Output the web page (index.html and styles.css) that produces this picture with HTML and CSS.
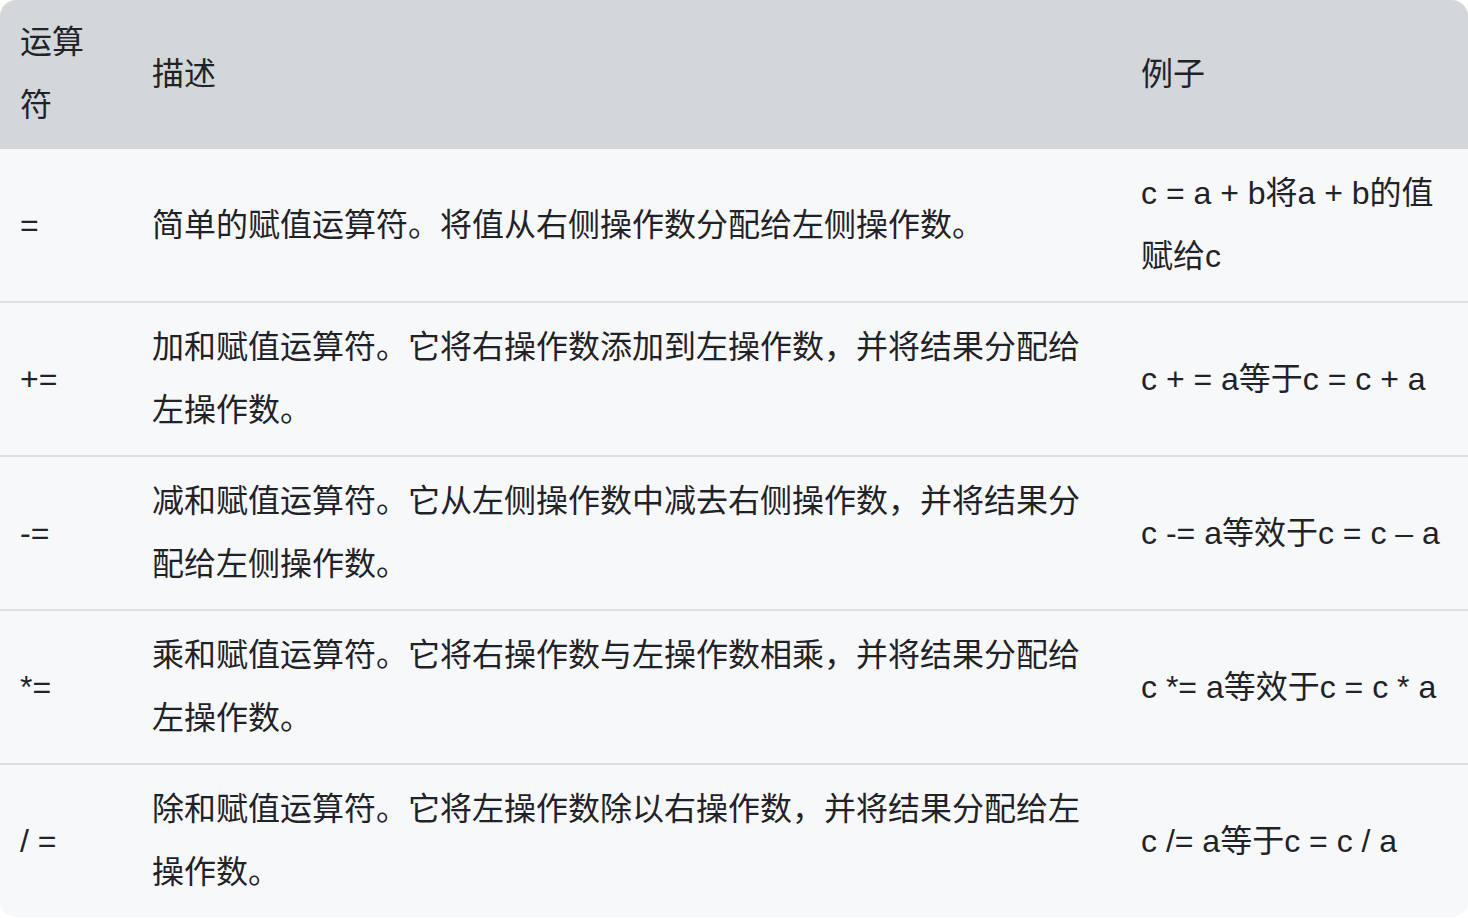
FILE: index.html
```html
<!DOCTYPE html>
<html lang="zh-CN">
<head>
    <meta charset="UTF-8">
    <meta name="viewport" content="width=device-width, initial-scale=1.0">
    <title>赋值运算符</title>
    <link rel="stylesheet" href="styles.css">
</head>
<body>
    <div class="tabela">
        <table>
            <thead>
                <tr>
                    <th class="col-op">运算符</th>
                    <th class="col-desc">描述</th>
                    <th class="col-ex">例子</th>
                </tr>
            </thead>
            <tbody>
                <tr>
                    <td>=</td>
                    <td>简单的赋值运算符。将值从右侧操作数分配给左侧操作数。</td>
                    <td>c = a + b将a + b的值赋给c</td>
                </tr>
                <tr>
                    <td>+=</td>
                    <td>加和赋值运算符。它将右操作数添加到左操作数，并将结果分配给左操作数。</td>
                    <td>c + = a等于c = c + a</td>
                </tr>
                <tr>
                    <td>-=</td>
                    <td>减和赋值运算符。它从左侧操作数中减去右侧操作数，并将结果分配给左侧操作数。</td>
                    <td>c -= a等效于c = c – a</td>
                </tr>
                <tr>
                    <td>*=</td>
                    <td>乘和赋值运算符。它将右操作数与左操作数相乘，并将结果分配给左操作数。</td>
                    <td>c *= a等效于c = c * a</td>
                </tr>
                <tr>
                    <td>/ =</td>
                    <td>除和赋值运算符。它将左操作数除以右操作数，并将结果分配给左操作数。</td>
                    <td>c /= a等于c = c / a</td>
                </tr>
            </tbody>
        </table>
    </div>
</body>
</html>
```

FILE: styles.css
```css
*{
    box-sizing: border-box;
    margin: 0;
    padding: 0;
}
body{
    background-color: #ffffff;
    font-family: "Liberation Sans", "Noto Sans CJK SC", sans-serif;
    color: #1f2328;
}
.tabela{
    width: 1468px;
    border-radius: 16px;
    overflow: hidden;
}
table{
    width: 100%;
    border-collapse: collapse;
    table-layout: fixed;
    font-size: 32px;
    line-height: 63px;
}
th{
    background-color: #d3d7da;
    font-weight: normal;
    text-align: left;
    padding: 11px 20px 12px;
    vertical-align: middle;
}
td{
    background-color: #f7f8fa;
    padding: 13px 20px;
    vertical-align: middle;
    border-top: solid #dcdfe2 2px;
}
tbody tr:first-child td{
    border-top: none;
}
.col-op{
    width: 132px;
}
.col-desc{
    width: 989px;
}
.col-ex{
    width: 347px;
}
```
